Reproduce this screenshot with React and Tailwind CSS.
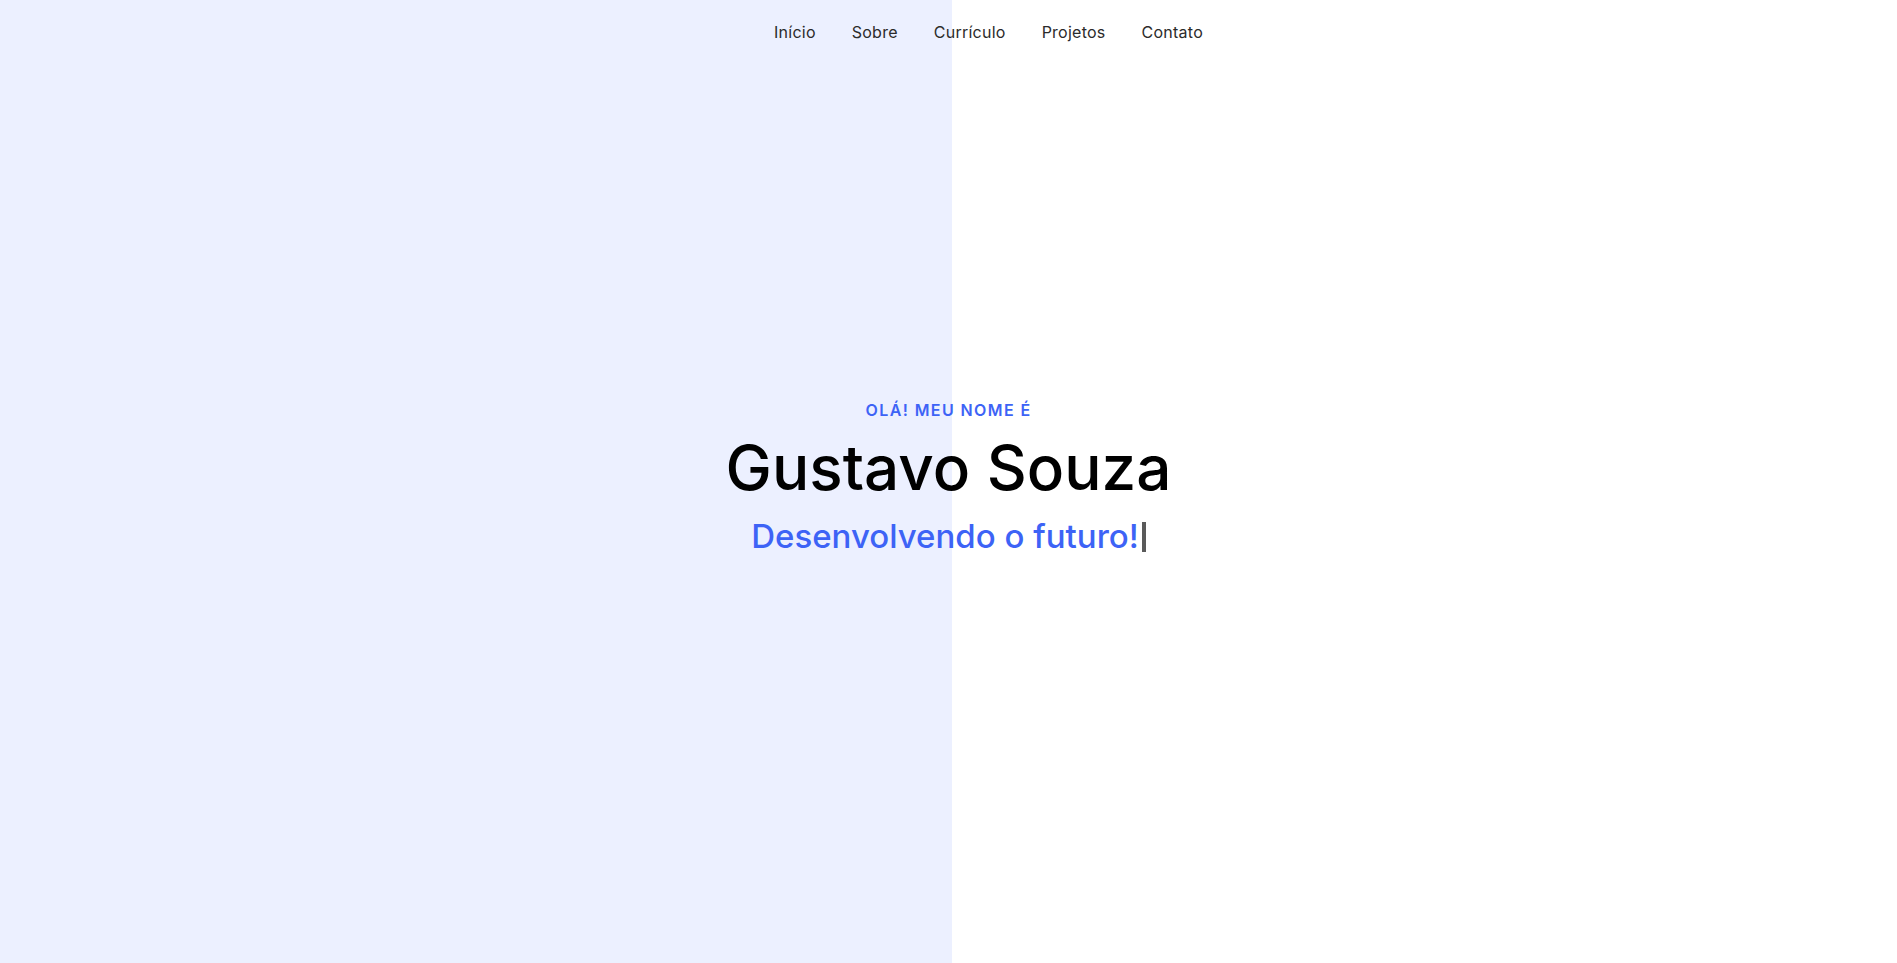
import React from 'react';

const links = ['Início', 'Sobre', 'Currículo', 'Projetos', 'Contato'];

const App = () => {
  return (
    <div className="relative min-h-screen h-[963px] bg-white overflow-hidden font-['Inter',sans-serif]">
      {/* Left tinted half */}
      <div className="absolute inset-y-0 left-0 w-[952px] bg-[#ecf0ff]"></div>

      {/* Nav */}
      <nav className="relative flex items-center h-[64px] pl-[774px] gap-[36px]">
        {links.map((l) => (
          <a key={l} href="#" className="text-[16px] tracking-[0.25px] text-[#2b2b2b]">
            {l}
          </a>
        ))}
      </nav>

      {/* Hero */}
      <section className="relative flex flex-col items-center pt-[338px]">
        <p className="text-[16px] font-semibold tracking-[1.4px] text-[#3d63f6] leading-none">
          OLÁ! MEU NOME É
        </p>
        <h1 className="mt-[19px] text-[62px] font-medium text-black leading-none">
          Gustavo Souza
        </h1>
        <h2 className="mt-[21px] flex items-center text-[33px] font-medium text-[#3d63f6] leading-none">
          Desenvolvendo o futuro!
          <span className="ml-[3px] inline-block w-[4px] h-[30px] bg-[#5a5a5a]"></span>
        </h2>
      </section>
    </div>
  );
};

export default App;
